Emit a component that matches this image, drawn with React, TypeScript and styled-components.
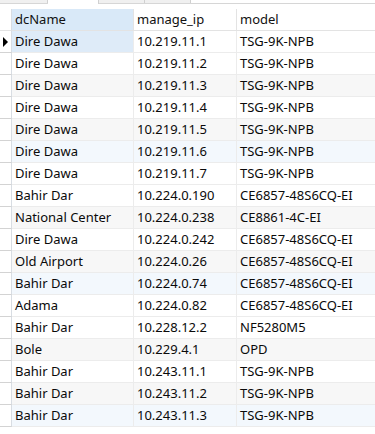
import React from "react";
import styled, { createGlobalStyle } from "styled-components";

const Global = createGlobalStyle`
  html, body { margin: 0; padding: 0; background: #ffffff; }
  body { font-family: "Noto Sans", "Noto Sans CJK SC", sans-serif; }
`;

const Page = styled.div`
  width: 375px;
  height: 434px;
  overflow: hidden;
  background: #ffffff;
`;

const TabStrip = styled.div`
  display: flex;
  height: 3px;
  border-bottom: 1px solid #d6d6d6;
`;

const Tab = styled.div<{ $w: number; $active?: boolean }>`
  width: ${(p) => p.$w}px;
  box-sizing: border-box;
  background: ${(p) => (p.$active ? "#ffffff" : "#f0f0f0")};
  border-right: 1px solid #d0d0d0;
  margin-bottom: ${(p) => (p.$active ? "-1px" : "0")};
`;

const Spacer = styled.div`
  height: 5px;
`;

const Grid = styled.div`
  display: grid;
  grid-template-columns: 12px 122px 103px 160px;
`;

const HeadCell = styled.div<{ $sel?: boolean; $corner?: boolean }>`
  height: 21px;
  box-sizing: content-box;
  border-bottom: 1px solid #e3e3e3;
  border-right: 1px solid ${(p) => (p.$corner ? "#d8dde3" : "#e3e3e3")};
  background: ${(p) => (p.$sel ? "#d9e9f8" : "#ffffff")};
  font-size: 13px;
  line-height: 21px;
  padding-left: 3px;
  color: #111;
  white-space: nowrap;
  overflow: hidden;
  &:first-child { padding-left: 0; }
`;

const Indicator = styled.div`
  height: 21px;
  border-bottom: 1px solid #d3d3d3;
  border-right: 1px solid #d8dde3;
  display: flex;
  align-items: center;
  padding-left: 3px;
  box-sizing: content-box;
  width: 8px;
`;

const Arrow = styled.div`
  width: 0;
  height: 0;
  border-top: 5px solid transparent;
  border-bottom: 5px solid transparent;
  border-left: 5px solid #000;
`;

const Cell = styled.div<{ $bg: string }>`
  height: 21px;
  border-bottom: 1px solid #ececec;
  border-right: 1px solid #ececec;
  background: ${(p) => p.$bg};
  font-size: 13px;
  line-height: 21px;
  padding-left: 3px;
  color: #0a0a0a;
  white-space: nowrap;
  overflow: hidden;
`;

const rows: [string, string, string][] = [
  ["Dire Dawa", "10.219.11.1", "TSG-9K-NPB"],
  ["Dire Dawa", "10.219.11.2", "TSG-9K-NPB"],
  ["Dire Dawa", "10.219.11.3", "TSG-9K-NPB"],
  ["Dire Dawa", "10.219.11.4", "TSG-9K-NPB"],
  ["Dire Dawa", "10.219.11.5", "TSG-9K-NPB"],
  ["Dire Dawa", "10.219.11.6", "TSG-9K-NPB"],
  ["Dire Dawa", "10.219.11.7", "TSG-9K-NPB"],
  ["Bahir Dar", "10.224.0.190", "CE6857-48S6CQ-EI"],
  ["National Center", "10.224.0.238", "CE8861-4C-EI"],
  ["Dire Dawa", "10.224.0.242", "CE6857-48S6CQ-EI"],
  ["Old Airport", "10.224.0.26", "CE6857-48S6CQ-EI"],
  ["Bahir Dar", "10.224.0.74", "CE6857-48S6CQ-EI"],
  ["Adama", "10.224.0.82", "CE6857-48S6CQ-EI"],
  ["Bahir Dar", "10.228.12.2", "NF5280M5"],
  ["Bole", "10.229.4.1", "OPD"],
  ["Bahir Dar", "10.243.11.1", "TSG-9K-NPB"],
  ["Bahir Dar", "10.243.11.2", "TSG-9K-NPB"],
  ["Bahir Dar", "10.243.11.3", "TSG-9K-NPB"],
];

const pattern = ["#ffffff", "#ffffff", "#f7f7f7", "#ffffff", "#f7f7f7", "#f3f8fd"];

export default function App() {
  return (
    <Page>
      <Global />
      <TabStrip>
        <Tab $w={48} />
        <Tab $w={51} $active />
        <Tab $w={46} />
        <Tab $w={46} />
      </TabStrip>
      <Spacer />
      <Grid>
        <HeadCell $corner />
        <HeadCell $sel>dcName</HeadCell>
        <HeadCell>manage_ip</HeadCell>
        <HeadCell>model</HeadCell>
        {rows.map((r, i) => {
          const bg = pattern[i % 6];
          return (
            <React.Fragment key={i}>
              <Indicator>{i === 0 ? <Arrow /> : null}</Indicator>
              <Cell $bg={i === 0 ? "#deebf8" : bg}>{r[0]}</Cell>
              <Cell $bg={bg}>{r[1]}</Cell>
              <Cell $bg={bg}>{r[2]}</Cell>
            </React.Fragment>
          );
        })}
      </Grid>
    </Page>
  );
}
